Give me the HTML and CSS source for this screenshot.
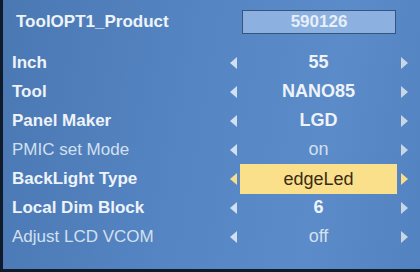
FILE: index.html
```html
<!DOCTYPE html>
<html lang="en">
<head>
  <meta charset="UTF-8" />
  <title>ToolOPT1_Product</title>
  <link rel="stylesheet" href="styles.css">
</head>
<body>

  <div class="screen">
    <div class="title-row">
      <span class="title">ToolOPT1_Product</span>
      <span class="code-box">590126</span>
    </div>

    <div class="menu">
      <div class="row">
        <span class="label">Inch</span>
        <span class="arrow left"></span>
        <span class="value">55</span>
        <span class="arrow right"></span>
      </div>
      <div class="row">
        <span class="label">Tool</span>
        <span class="arrow left"></span>
        <span class="value">NANO85</span>
        <span class="arrow right"></span>
      </div>
      <div class="row">
        <span class="label">Panel Maker</span>
        <span class="arrow left"></span>
        <span class="value">LGD</span>
        <span class="arrow right"></span>
      </div>
      <div class="row dim">
        <span class="label">PMIC set Mode</span>
        <span class="arrow left"></span>
        <span class="value">on</span>
        <span class="arrow right"></span>
      </div>
      <div class="row active">
        <span class="label">BackLight Type</span>
        <span class="arrow left"></span>
        <span class="value">edgeLed</span>
        <span class="arrow right"></span>
      </div>
      <div class="row">
        <span class="label">Local Dim Block</span>
        <span class="arrow left"></span>
        <span class="value">6</span>
        <span class="arrow right"></span>
      </div>
      <div class="row dim">
        <span class="label">Adjust LCD VCOM</span>
        <span class="arrow left"></span>
        <span class="value">off</span>
        <span class="arrow right"></span>
      </div>
    </div>
  </div>
  <div class="bezel"></div>

</body>
</html>
```
FILE: styles.css
```css
body {
  margin: 0;
  width: 420px;
  height: 272px;
  overflow: hidden;
  font-family: 'Liberation Sans', Arial, sans-serif;
  background: #0f1a2a;
}

.screen {
  height: 269px;
  margin-left: 3px;
  background: linear-gradient(100deg, #4a78b3 0%, #5585c3 45%, #5b8bc8 75%, #5282bf 100%);
  color: #eef3f9;
}

.title-row {
  display: flex;
  align-items: center;
  height: 44px;
  padding-left: 13px;
}

.title {
  width: 226px;
  font-size: 17px;
  font-weight: bold;
}

.code-box {
  width: 152px;
  height: 22px;
  line-height: 22px;
  text-align: center;
  background: #8cb1e0;
  border: 1px solid #35557f;
  color: #e6eef8;
  font-size: 17px;
  font-weight: bold;
}

.menu {
  padding-top: 4px;
}

.row {
  display: grid;
  grid-template-columns: 214px 14px 157px 14px;
  align-items: center;
  height: 29px;
  padding-left: 9px;
  font-size: 17px;
  font-weight: bold;
}

.value {
  text-align: center;
  line-height: 29px;
  font-size: 18px;
}

.arrow {
  width: 0;
  height: 0;
  justify-self: center;
  border-top: 6px solid transparent;
  border-bottom: 6px solid transparent;
}

.arrow.left {
  border-right: 7px solid #d0e0f2;
}

.arrow.right {
  border-left: 7px solid #c8d6e6;
}

.row.dim {
  font-weight: normal;
  color: #d2e0f0;
}

.row.active .value {
  height: 30px;
  line-height: 30px;
  background: #fbe08c;
  color: #3a2c14;
  font-weight: normal;
}

.row.active .arrow.left {
  border-right-color: #f6dd8e;
}

.row.active .arrow.right {
  border-left-color: #f6dd8e;
}

.bezel {
  height: 3px;
}
```
